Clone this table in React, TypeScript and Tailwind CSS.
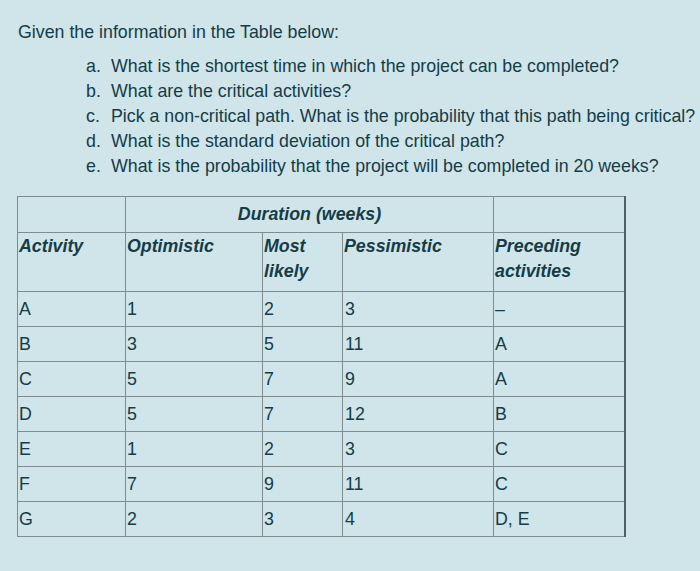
const questions = [
  ["a.", "What is the shortest time in which the project can be completed?"],
  ["b.", "What are the critical activities?"],
  ["c.", "Pick a non-critical path. What is the probability that this path being critical?"],
  ["d.", "What is the standard deviation of the critical path?"],
  ["e.", "What is the probability that the project will be completed in 20 weeks?"],
];

const rows = [
  ["A", "1", "2", "3", "–"],
  ["B", "3", "5", "11", "A"],
  ["C", "5", "7", "9", "A"],
  ["D", "5", "7", "12", "B"],
  ["E", "1", "2", "3", "C"],
  ["F", "7", "9", "11", "C"],
  ["G", "2", "3", "4", "D, E"],
];

const line = "border border-[#7f8d91]";
const faint = "border-l-[#b9cbd0]";

export default function App() {
  return (
    <div
      className="min-h-[571px] w-[700px] overflow-hidden bg-[#cfe5ea] text-[#153c47] text-[17.8px]"
      style={{ fontFamily: '"Liberation Sans", Arial, sans-serif' }}
    >
      <div className="pl-[18px] pt-[20px] leading-[25px]">
        Given the information in the Table below:
      </div>

      <ol className="mt-[9px] pl-[86px] leading-[25px] whitespace-nowrap">
        {questions.map(([k, q]) => (
          <li key={k} className="flex">
            <span className="w-[25px] shrink-0">{k}</span>
            <span>{q}</span>
          </li>
        ))}
      </ol>

      <table className="ml-[17px] mt-[17px] border-collapse table-fixed w-[607px]">
        <colgroup>
          <col className="w-[108px]" />
          <col className="w-[137px]" />
          <col className="w-[80px]" />
          <col className="w-[151px]" />
          <col className="w-[131px]" />
        </colgroup>
        <thead>
          <tr className="h-[36px]">
            <th className={line}></th>
            <th colSpan={3} className={`${line} font-bold italic text-center align-middle`}>
              Duration (weeks)
            </th>
            <th className={`${line} border-r-2 border-r-[#4f6168]`}></th>
          </tr>
          <tr className="h-[59px] font-bold italic text-left align-top leading-[25px]">
            <th className={`${line} pl-[1px] pt-[1px]`}>Activity</th>
            <th className={`${line} pl-[1px] pt-[1px]`}>Optimistic</th>
            <th className={`${line} pl-[1px] pt-[1px]`}>
              Most
              <br />
              likely
            </th>
            <th className={`${line} ${faint} pl-[1px] pt-[1px]`}>Pessimistic</th>
            <th className={`${line} border-r-2 border-r-[#4f6168] pl-[1px] pt-[1px]`}>
              Preceding
              <br />
              activities
            </th>
          </tr>
        </thead>
        <tbody>
          {rows.map((r) => (
            <tr key={r[0]} className="h-[35px]">
              {r.map((c, i) => (
                <td
                  key={i}
                  className={`${line} ${i === 3 ? `${faint} pl-[2px]` : "pl-[1px]"} ${
                    i === 4 ? "border-r-2 border-r-[#4f6168]" : ""
                  } align-middle`}
                >
                  {c}
                </td>
              ))}
            </tr>
          ))}
        </tbody>
      </table>
    </div>
  );
}
